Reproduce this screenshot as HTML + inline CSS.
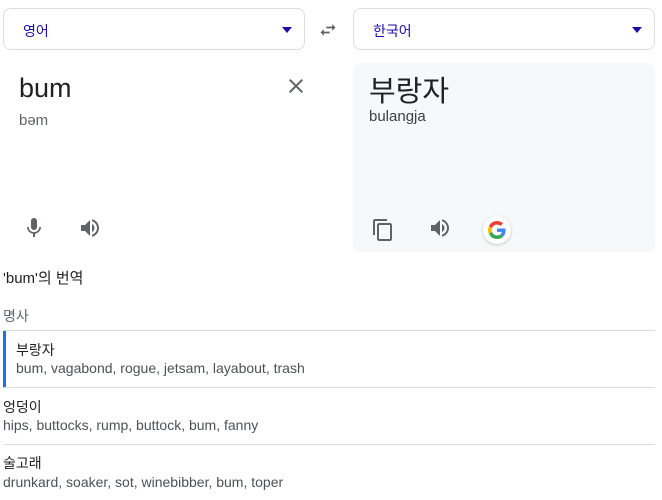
<!DOCTYPE html>
<html><head><meta charset="utf-8"><style>
*{margin:0;padding:0;box-sizing:border-box}
body{width:662px;height:500px;background:#fff;font-family:"Liberation Sans","Noto Sans CJK KR",sans-serif;position:relative;overflow:hidden;color:#202124}
.a{position:absolute}
.sel{position:absolute;top:8px;height:42px;width:302px;border:1px solid #dadce0;border-radius:8px}
.sel span{position:absolute;left:19px;top:12px;font-size:14px;color:#1a0dab}
.sel i{position:absolute;right:12px;top:18px;border-left:5px solid transparent;border-right:5px solid transparent;border-top:6px solid #1a0dab}
.line{position:absolute;left:3px;width:652px;height:1px;background:#dadce0}
.t{font-size:14px;color:#202124}
.s{font-size:14px;color:#4d5156}
</style></head><body>
<div class="sel" style="left:3px"><span>영어</span><i></i></div>
<div class="sel" style="left:353px"><span>한국어</span><i></i></div>
<svg class="a" style="left:318px;top:20px" width="20" height="20" viewBox="0 0 24 24"><path fill="#5f6368" d="M6.99 11L3 15l3.99 4v-3H14v-2H6.99v-3zM21 9l-3.99-4v3H10v2h7.01v3L21 9z"/></svg>
<div class="a" style="left:19px;top:73px;font-size:27px">bum</div>
<div class="a" style="left:19px;top:112px;font-size:15px;color:#5f6368">bəm</div>
<svg class="a" style="left:284px;top:74px" width="24" height="24" viewBox="0 0 24 24"><path fill="#5f6368" d="M19 6.41L17.59 5 12 10.59 6.41 5 5 6.41 10.59 12 5 17.59 6.41 19 12 13.41 17.59 19 19 17.59 13.41 12z"/></svg>
<svg class="a" style="left:22px;top:216px" width="24" height="24" viewBox="0 0 24 24"><path fill="#5f6368" d="M12 14c1.66 0 3-1.34 3-3V5c0-1.66-1.34-3-3-3S9 3.34 9 5v6c0 1.66 1.34 3 3 3zm5.3-3c0 3-2.54 5.1-5.3 5.1S6.7 14 6.7 11H5c0 3.41 2.72 6.23 6 6.72V21h2v-3.28c3.28-.48 6-3.3 6-6.72h-1.7z"/></svg>
<svg class="a" style="left:78px;top:216px" width="24" height="24" viewBox="0 0 24 24"><path fill="#5f6368" d="M3 9v6h4l5 5V4L7 9H3zm13.5 3c0-1.77-1.02-3.29-2.5-4.03v8.05c1.48-.73 2.5-2.25 2.5-4.02zM14 3.23v2.06c2.89.86 5 3.54 5 6.71s-2.11 5.85-5 6.71v2.06c4.01-.91 7-4.49 7-8.77s-2.99-7.86-7-8.77z"/></svg>
<div class="a" style="left:353px;top:63px;width:302px;height:189px;background:#f7f8fa;border-radius:8px"></div>
<div class="a" style="left:369px;top:68px;font-size:29px">부랑자</div>
<div class="a" style="left:369px;top:108px;font-size:15px;color:#3c4043">bulangja</div>
<svg class="a" style="left:371px;top:218px" width="24" height="24" viewBox="0 0 24 24"><path fill="#5f6368" d="M16 1H4c-1.1 0-2 .9-2 2v14h2V3h12V1zm3 4H8c-1.1 0-2 .9-2 2v14c0 1.1.9 2 2 2h11c1.1 0 2-.9 2-2V7c0-1.1-.9-2-2-2zm0 16H8V7h11v14z"/></svg>
<svg class="a" style="left:428px;top:216px" width="24" height="24" viewBox="0 0 24 24"><path fill="#5f6368" d="M3 9v6h4l5 5V4L7 9H3zm13.5 3c0-1.77-1.02-3.29-2.5-4.03v8.05c1.48-.73 2.5-2.25 2.5-4.02zM14 3.23v2.06c2.89.86 5 3.54 5 6.71s-2.11 5.85-5 6.71v2.06c4.01-.91 7-4.49 7-8.77s-2.99-7.86-7-8.77z"/></svg>
<div class="a" style="left:483px;top:216px;width:28px;height:28px;border-radius:50%;background:#fff;box-shadow:0 1px 3px rgba(0,0,0,.2)"></div>
<svg class="a" style="left:488px;top:221px" width="18" height="18" viewBox="0 0 48 48"><path fill="#EA4335" d="M24 9.5c3.54 0 6.71 1.22 9.21 3.6l6.85-6.85C35.9 2.38 30.47 0 24 0 14.62 0 6.51 5.38 2.56 13.22l7.98 6.19C12.43 13.72 17.74 9.5 24 9.5z"/><path fill="#4285F4" d="M46.98 24.55c0-1.57-.15-3.09-.38-4.55H24v9.02h12.94c-.58 2.96-2.26 5.48-4.78 7.18l7.73 6c4.51-4.18 7.09-10.36 7.09-17.65z"/><path fill="#FBBC05" d="M10.53 28.59c-.48-1.45-.76-2.99-.76-4.59s.27-3.14.76-4.59l-7.98-6.19C.92 16.46 0 20.12 0 24c0 3.88.92 7.54 2.56 10.78l7.97-6.19z"/><path fill="#34A853" d="M24 48c6.48 0 11.93-2.13 15.89-5.81l-7.73-6c-2.15 1.45-4.92 2.3-8.16 2.3-6.26 0-11.57-4.22-13.47-9.91l-7.98 6.19C6.51 42.62 14.62 48 24 48z"/></svg>
<div class="a" style="left:3px;top:267px;font-size:15px">'bum'의 번역</div>
<div class="a" style="left:3px;top:306px;font-size:14px;color:#5f6368">명사</div>
<div class="line" style="top:330px"></div>
<div class="a" style="left:3px;top:331px;width:3px;height:56px;background:#1a73e8"></div>
<div class="a t" style="left:16px;top:340px">부랑자</div>
<div class="a s" style="left:16px;top:360px">bum, vagabond, rogue, jetsam, layabout, trash</div>
<div class="line" style="top:387px"></div>
<div class="a t" style="left:3px;top:397px">엉덩이</div>
<div class="a s" style="left:3px;top:417px">hips, buttocks, rump, buttock, bum, fanny</div>
<div class="line" style="top:444px"></div>
<div class="a t" style="left:3px;top:453px">술고래</div>
<div class="a s" style="left:3px;top:474px">drunkard, soaker, sot, winebibber, bum, toper</div>
</body></html>
